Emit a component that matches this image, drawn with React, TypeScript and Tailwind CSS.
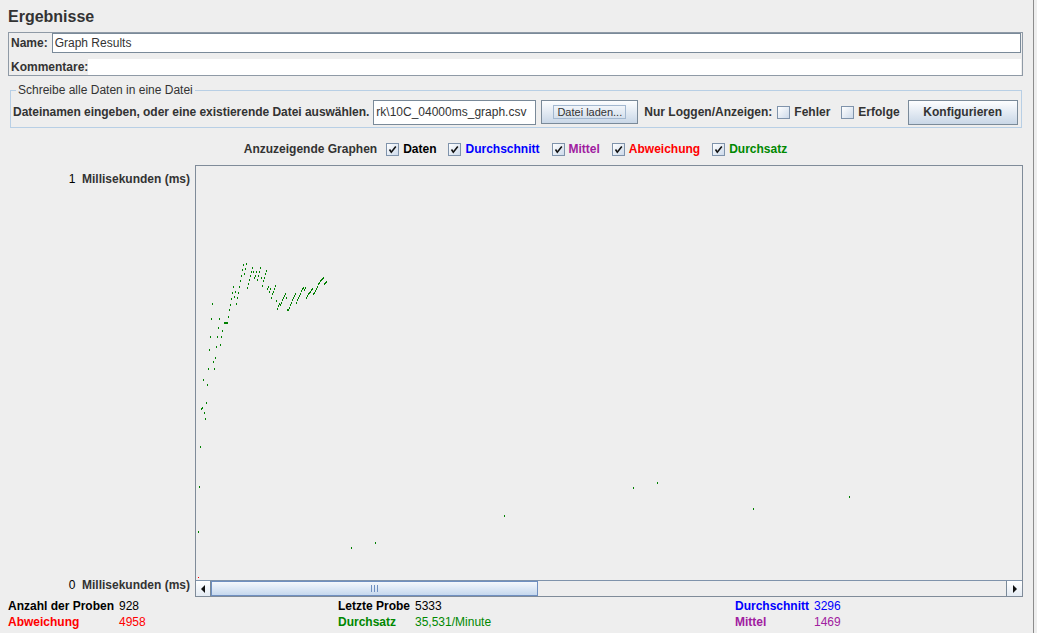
import React from "react";

const font = { fontFamily: '"Liberation Sans", Arial, sans-serif' };

// dots read off the reference, grouped by the crop they were measured in
const upper: [number, number][] = [
  [55,383],[72,383],[58,328],[60,288],[64,233],[67,190],[70,362],[76,350],[79,318],[82,288],[85,262],[88,233],[91,312],[94,288],[97,270],[101,247],[104,245],[107,246],[110,246],[115,228],[118,208],[121,191],[124,173],[127,155],[130,137],[133,168],[136,152],[139,188],[142,170],[145,156],[148,137],[151,120],[154,104],[157,88],[160,72],[163,98],[166,84],[169,69],[172,140],[175,128],[178,118],[181,106],[184,92],[187,80],[190,92],[193,112],[196,104],[199,92],[202,116],[205,106],[208,92],[211,80],[214,112],[217,134],[220,120],[223,110],[226,100],[229,90],[232,145],[235,138],[238,152],[241,145],[244,170],[247,160],[250,152],[253,143],[256,134],[259,180],[262,204],[265,195],[268,188],[271,192],[274,185],[277,177],[280,170],[283,166],[286,160],[289,172],[292,206],[295,206],[298,200],[301,192],[304,185],[307,178],[310,172],[313,166],[316,160],[319,185],[322,178],[325,172],[328,165],[331,158],[334,150],[337,145],[340,140],[343,148],[346,140],[349,172],[352,165],[355,160],[358,156],[361,152],[364,147],[367,143],[370,158],[373,156],[376,150],[379,144],[382,137],[385,130],[388,125],[391,120],[394,116],[397,113],[400,110],[403,128],[406,125],[409,122],
];
const lower: [number, number][] = [
  [40,57],[52,72],[49,126],[37,140],[34,143],[43,156],[46,173],[31,258],[28,378],[25,512],[484,560],[556,545],
];
const far: [number, number][] = [[73,164],[460,80],[532,65],[820,143],[1108,107]];

// plot origin on the page is (196,166)
const dots = [
  ...upper.map(([x, y]) => [190 + x / 3 - 196, 240 + y / 3 - 166]),
  ...lower.map(([x, y]) => [190 + x / 3 - 196, 360 + y / 3 - 166]),
  ...far.map(([x, y]) => [480 + x / 3 - 196, 460 + y / 3 - 166]),
];

function Check({ checked }: { checked?: boolean }) {
  return (
    <span className="w-[13px] h-[13px] shrink-0 border border-[#7f93ab] bg-linear-to-br from-white to-[#cddaea] flex items-center justify-center">
      {checked && (
        <svg width="9" height="9" viewBox="0 0 9 9">
          <path d="M1.5 4.5 L3.3 7.2 L7.8 1.6" stroke="#111" strokeWidth="1.6" fill="none" />
        </svg>
      )}
    </span>
  );
}

function Graph({ label, color, checked = true }: { label: string; color: string; checked?: boolean }) {
  return (
    <div className="flex items-center gap-[4px]">
      <Check checked={checked} />
      <span className={`font-bold ${color}`}>{label}</span>
    </div>
  );
}

function Stat({ label, value, color }: { label: string; value: string; color: string }) {
  return (
    <>
      <span className={`font-bold ${color}`}>{label}</span>
      <span className={color}>{value}</span>
    </>
  );
}

export default function App() {
  return (
    <div className="w-[1037px] h-[633px] bg-[#eeeeee] flex text-[12px] text-[#333333] overflow-hidden whitespace-nowrap" style={font}>
      <div className="w-[1033px] pl-[8px] pr-[10px] flex flex-col">
        {/* Title */}
        <div className="pt-[6px] h-[28px] text-[16px] leading-[22px] font-bold">Ergebnisse</div>

        {/* Name / comments */}
        <div className="mt-[4px] border border-[#8f9aa6] flex flex-col">
          <div className="h-[20px] flex items-stretch gap-[4px] pl-[2px] pr-[1px]">
            <span className="font-bold self-center">Name:</span>
            <div className="flex-1 bg-white border border-[#7a8a99] flex items-center px-[2px]">Graph Results</div>
          </div>
          <div className="mt-[6px] h-[16px] flex items-stretch pl-[2px] pr-[1px]">
            <span className="font-bold self-center">Kommentare:</span>
            <div className="flex-1 bg-white" />
          </div>
        </div>

        {/* File section */}
        <fieldset className="mt-[7px] ml-[2px] mr-[1px] border border-[#b8cfe5] px-[2px] pt-[2px] pb-[2px]">
          <legend className="ml-[3px] px-[2px] leading-[14px] text-[12px]">Schreibe alle Daten in eine Datei</legend>
          <div className="h-[26px] flex items-center">
            <span className="font-bold shrink-0 tracking-[-0.03px]">Dateinamen eingeben, oder eine existierende Datei auswählen.</span>
            <div className="ml-[4px] w-[163px] shrink-0 h-[25px] bg-white border border-[#7a8a99] flex items-center overflow-hidden pl-[2px]">
              rk\10C_04000ms_graph.csv
            </div>
            <button className="ml-[5px] w-[97px] shrink-0 h-[24px] border border-[#7a8a99] bg-linear-to-b from-[#fdfeff] to-[#c9d7e7] flex items-center justify-center">
              <span className="border border-[#a3b8d0] px-[3px] leading-[12px] text-[11px]">Datei laden...</span>
            </button>
            <span className="ml-[6px] font-bold shrink-0">Nur Loggen/Anzeigen:</span>
            <div className="ml-[5px] flex items-center gap-[4px] shrink-0">
              <Check />
              <span className="font-bold">Fehler</span>
            </div>
            <div className="ml-[11px] flex items-center gap-[4px] shrink-0">
              <Check />
              <span className="font-bold">Erfolge</span>
            </div>
            <button className="ml-[8px] w-[110px] shrink-0 h-[25px] border border-[#7a8a99] bg-linear-to-b from-[#fdfeff] to-[#c9d7e7] font-bold">
              Konfigurieren
            </button>
          </div>
        </fieldset>

        {/* Graph toggles */}
        <div className="mt-[11px] h-[20px] flex items-center justify-center gap-[12px]">
          <span className="font-bold mr-[-3px]">Anzuzeigende Graphen</span>
          <Graph label="Daten" color="text-black" />
          <Graph label="Durchschnitt" color="text-[#0000ff]" />
          <Graph label="Mittel" color="text-[#a020a0]" />
          <Graph label="Abweichung" color="text-[#ff0000]" />
          <Graph label="Durchsatz" color="text-[#008800]" />
        </div>

        {/* Chart */}
        <div className="mt-[6px] flex h-[432px]">
          <div className="w-[187px] pr-[5px] pt-[7px] pb-[5px] flex flex-col justify-between items-end font-bold leading-[14px]">
            <span><span className="text-black font-normal">1</span>&nbsp;&nbsp;Millisekunden (ms)</span>
            <span><span className="text-black font-normal">0</span>&nbsp;&nbsp;Millisekunden (ms)</span>
          </div>
          <div className="w-[828px] border border-[#7f8b99] flex flex-col">
            <div className="flex-1 relative">
              <svg className="absolute inset-0" width="826" height="414" shapeRendering="crispEdges">
                {dots.map(([x, y], i) => (
                  <rect key={i} x={Math.round(x)} y={Math.round(y)} width="1" height="2" fill="#008000" />
                ))}
                <rect x="2" y="411" width="1" height="1" fill="#ff0000" />
              </svg>
            </div>
            <div className="h-[16px] border-t border-[#7f93ab] flex">
              <div className="w-[15px] bg-linear-to-b from-white to-[#e4ebf3] border-r border-[#7a8a99] flex items-center justify-center">
                <svg width="5" height="8" viewBox="0 0 5 8"><path d="M4 0 L0 4 L4 8 Z" fill="#111" /></svg>
              </div>
              <div className="w-[327px] border border-[#6f8fc0] bg-linear-to-b from-[#f4f8fc] to-[#c6d8ee] flex items-center justify-center gap-[2px]">
                <span className="w-px h-[7px] bg-[#6f8fc0]" />
                <span className="w-px h-[7px] bg-[#6f8fc0]" />
                <span className="w-px h-[7px] bg-[#6f8fc0]" />
              </div>
              <div className="flex-1 bg-[#eeeeee]" />
              <div className="w-[16px] bg-linear-to-b from-white to-[#e4ebf3] border-l border-[#7a8a99] flex items-center justify-center">
                <svg width="5" height="8" viewBox="0 0 5 8"><path d="M1 0 L5 4 L1 8 Z" fill="#111" /></svg>
              </div>
            </div>
          </div>
        </div>

        {/* Stats */}
        <div className="mt-[2px] grid grid-cols-[330px_397px_1fr] leading-[14px]">
          <div className="grid grid-cols-[auto_1fr] gap-x-[5px] gap-y-[2px]">
            <Stat label="Anzahl der Proben" value="928" color="text-black" />
            <Stat label="Abweichung" value="4958" color="text-[#ff0000]" />
          </div>
          <div className="grid grid-cols-[auto_1fr] gap-x-[5px] gap-y-[2px]">
            <Stat label="Letzte Probe" value="5333" color="text-black" />
            <Stat label="Durchsatz" value="35,531/Minute" color="text-[#008800]" />
          </div>
          <div className="grid grid-cols-[auto_1fr] gap-x-[5px] gap-y-[2px]">
            <Stat label="Durchschnitt" value="3296" color="text-[#0000ff]" />
            <Stat label="Mittel" value="1469" color="text-[#a020a0]" />
          </div>
        </div>
      </div>
      <div className="w-px bg-[#8c8c8c]" />
      <div className="flex-1 bg-[#eeeeee]" />
    </div>
  );
}
